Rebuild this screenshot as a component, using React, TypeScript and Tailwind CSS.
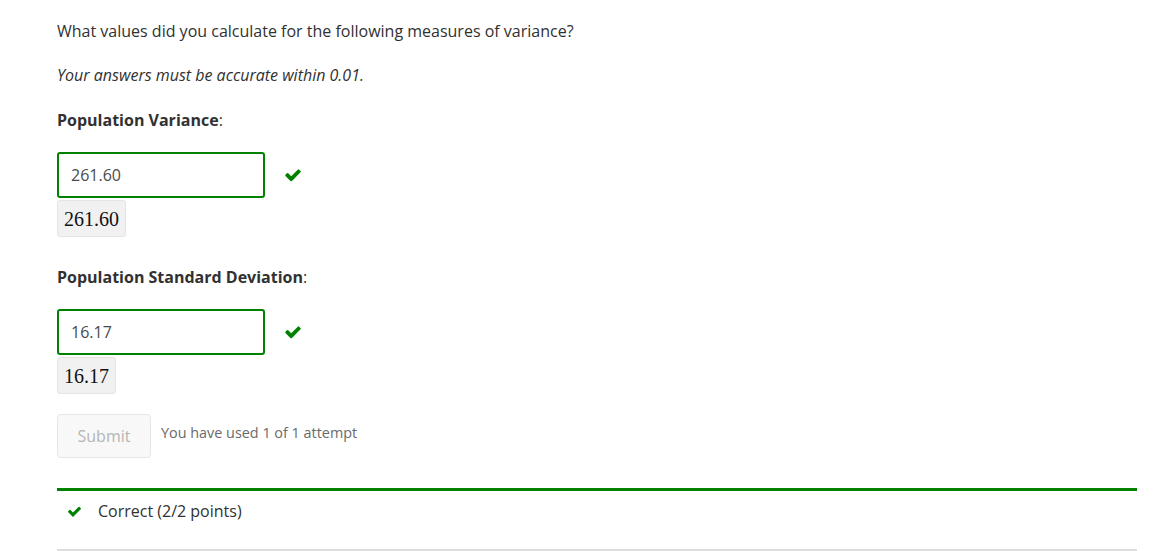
import React from "react";

function Check({ className }: { className?: string }) {
  return (
    <svg viewBox="0 0 1792 1792" className={className} fill="#008100" aria-hidden="true">
      <path d="M1671 566q0 40-28 68l-724 724-136 136q-28 28-68 28t-68-28l-136-136-362-362q-28-28-28-68t28-68l136-136q28-28 68-28t68 28l294 295 656-657q28-28 68-28t68 28l136 136q28 28 28 68z" />
    </svg>
  );
}

function Answer({ value, boxW }: { value: string; boxW: string }) {
  return (
    <div>
      <div className="flex items-center">
        <div className="w-[208px] h-[46px] border-2 border-[#008100] rounded-[3px] flex items-center pl-[12px] text-[16px] text-[#4a4a4a] bg-white">
          {value}
        </div>
        <Check className="w-[18px] h-[18px] ml-[19px]" />
      </div>
      <div
        className={`mt-[2px] h-[37px] ${boxW} bg-[#f1f1f1] border border-[#e4e4e4] rounded-[3px] flex items-center justify-center text-[#111111]`}
        style={{ fontFamily: '"Liberation Serif", serif', fontSize: "20px" }}
      >
        {value}
      </div>
    </div>
  );
}

export default function App() {
  return (
    <div
      className="bg-white w-[1158px] h-[551px] overflow-hidden text-[#313131]"
      style={{ fontFamily: '"Open Sans", "Noto Sans", sans-serif' }}
    >
      <div className="pl-[57px] pr-[21px] pt-[19px]">
        <p className="text-[16px] leading-[24px]">
          What values did you calculate for the following measures of variance?
        </p>
        <p className="mt-[20px] text-[16px] leading-[24px] italic">
          Your answers must be accurate within 0.01.
        </p>
        <p className="mt-[21px] text-[16px] leading-[24px]">
          <span className="font-bold">Population Variance</span>:
        </p>
        <div className="mt-[20px]">
          <Answer value="261.60" boxW="w-[69px]" />
        </div>
        <p className="mt-[28px] text-[16px] leading-[24px]">
          <span className="font-bold">Population Standard Deviation</span>:
        </p>
        <div className="mt-[20px]">
          <Answer value="16.17" boxW="w-[59px]" />
        </div>
        <div className="mt-[20px] flex items-center">
          <div className="w-[94px] h-[44px] border border-[#e6e6e6] rounded-[3px] bg-[#f8f8f8] flex items-center justify-center text-[16px] text-[#b5b5b5]">
            Submit
          </div>
          <span className="ml-[10px] text-[14.4px] text-[#6a6a6a] -mt-[7px]">
            You have used 1 of 1 attempt
          </span>
        </div>
        <div className="mt-[30px] border-t-[3px] border-[#008100]">
          <div className="flex items-center h-[40px] pt-[0px] pl-[10px]">
            <Check className="w-[15px] h-[15px]" />
            <span className="ml-[16px] text-[16px] leading-[24px] text-[#313131]">
              Correct (2/2 points)
            </span>
          </div>
          <div className="mt-[18px] border-t-2 border-[#dddddd]" />
        </div>
      </div>
    </div>
  );
}
